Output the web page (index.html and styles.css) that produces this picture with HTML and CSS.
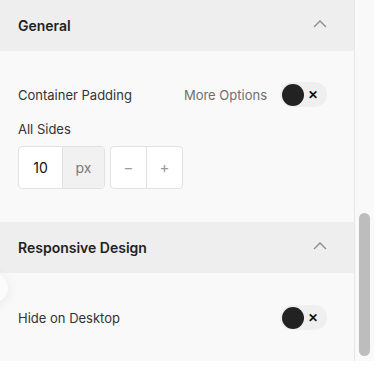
FILE: index.html
```html
<!DOCTYPE html>
<html lang="en">
<head>
  <meta charset="UTF-8" />
  <meta name="viewport" content="width=device-width, initial-scale=1" />
  <title>Settings</title>
  <link rel="stylesheet" href="styles.css">
</head>
<body>
<div class="frame">
  <div class="panel">
    <section class="group">
      <div class="group-head">
        <span>General</span>
        <svg class="chev" width="14" height="8" viewBox="0 0 14 8"><path d="M1 7 L7 1 L13 7" fill="none" stroke="#8a8a8a" stroke-width="1.4"/></svg>
      </div>
      <div class="group-body first">
        <div class="row">
          <span class="label">Container Padding</span>
          <div class="row-end">
            <span class="muted">More Options</span>
            <div class="toggle"><span class="knob"></span><span class="x">✕</span></div>
          </div>
        </div>
        <div class="label sub">All Sides</div>
        <div class="controls">
          <div class="field">
            <span class="num">10</span>
            <span class="unit">px</span>
          </div>
          <div class="stepper">
            <span>−</span>
            <span>+</span>
          </div>
        </div>
      </div>
    </section>
    <section class="group">
      <div class="group-head">
        <span>Responsive Design</span>
        <svg class="chev" width="14" height="8" viewBox="0 0 14 8"><path d="M1 7 L7 1 L13 7" fill="none" stroke="#8a8a8a" stroke-width="1.4"/></svg>
      </div>
      <div class="group-body second">
        <div class="row">
          <span class="label">Hide on Desktop</span>
          <div class="toggle"><span class="knob"></span><span class="x">✕</span></div>
        </div>
      </div>
    </section>
    <div class="fab"></div>
  </div>
  <div class="scroll">
    <div class="thumb"></div>
  </div>
</div>
</body>
</html>
```

FILE: styles.css
```css
body {
  margin: 0;
  background: #fff;
  font-family: Inter, "Noto Sans", sans-serif;
  color: #2b2b2b;
}
.frame {
  display: flex;
  width: 374px;
  height: 361px;
  overflow: hidden;
}
.panel {
  position: relative;
  width: 354px;
  background: #f9f9f9;
}
.scroll {
  width: 19px;
  background: #f9f9f9;
  border-left: 1px solid #e6e6e6;
  position: relative;
}
.thumb {
  position: absolute;
  left: 4px;
  top: 213px;
  width: 11px;
  height: 143px;
  border-radius: 6px;
  background: #bdbdbd;
}
.group-head {
  height: 51px;
  background: #eeeeee;
  display: flex;
  align-items: center;
  justify-content: space-between;
  padding: 0 27px 0 18px;
  font-weight: 600;
  font-size: 14px;
  color: #222;
}
.chev {
  margin-top: -4px;
}
.group-body.first {
  padding: 31px 27px 33px 18px;
}
.group-body.second {
  padding: 32px 27px 30px 18px;
}
.row {
  display: flex;
  align-items: center;
  justify-content: space-between;
  height: 25px;
}
.row-end {
  display: flex;
  align-items: center;
  gap: 13px;
}
.label {
  font-size: 13px;
  color: #333;
}
.muted {
  font-size: 13px;
  color: #6f6f6f;
}
.sub {
  margin-top: 12px;
  line-height: 20px;
}
.toggle {
  width: 47px;
  height: 25px;
  border-radius: 13px;
  background: #efefef;
  display: flex;
  align-items: center;
  padding-left: 2px;
  box-sizing: border-box;
}
.knob {
  width: 22px;
  height: 22px;
  border-radius: 50%;
  background: #222;
}
.x {
  margin-left: 4px;
  font-size: 12px;
  font-weight: 600;
  color: #111;
}
.controls {
  display: flex;
  gap: 5px;
  margin-top: 7px;
}
.field, .stepper {
  display: flex;
  height: 43px;
  border: 1px solid #e2e2e2;
  border-radius: 4px;
  box-sizing: border-box;
  background: #fff;
  overflow: hidden;
}
.num {
  width: 43px;
  display: flex;
  align-items: center;
  justify-content: center;
  font-size: 14px;
  color: #111;
  border-right: 1px solid #e2e2e2;
}
.unit {
  width: 41px;
  display: flex;
  align-items: center;
  justify-content: center;
  background: #f1f1f1;
  font-size: 14px;
  color: #7a7a7a;
}
.stepper span {
  width: 35px;
  display: flex;
  align-items: center;
  justify-content: center;
  font-size: 15px;
  color: #9a9a9a;
}
.stepper span + span {
  border-left: 1px solid #e2e2e2;
}
.fab {
  position: absolute;
  left: -22px;
  top: 273px;
  width: 30px;
  height: 30px;
  border-radius: 50%;
  background: #fbfbfb;
  box-shadow: 0 2px 12px rgb(0 0 0 / 0.08);
}
```
